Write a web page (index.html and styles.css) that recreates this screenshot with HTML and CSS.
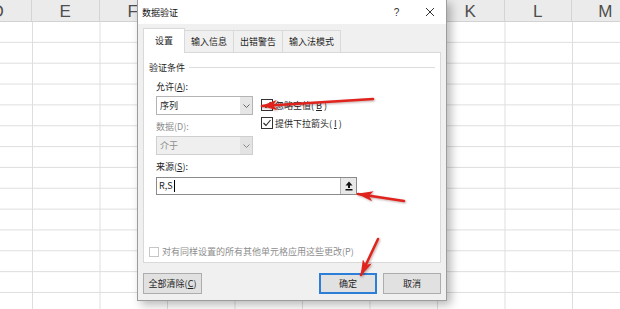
FILE: index.html
```html
<!DOCTYPE html>
<html lang="zh-CN">
<head>
  <meta charset="UTF-8" />
  <title>数据验证</title>
  <link rel="stylesheet" href="styles.css">
</head>
<body>

  <div class="sheet">
    <div class="col-heads">
      <div class="col-head">D</div>
      <div class="col-head">E</div>
      <div class="col-head">F</div>
      <div class="col-head">G</div>
      <div class="col-head">H</div>
      <div class="col-head">I</div>
      <div class="col-head">J</div>
      <div class="col-head">K</div>
      <div class="col-head">L</div>
      <div class="col-head">M</div>
    </div>
    <div class="cells"></div>
  </div>

  <div class="dialog">
    <div class="titlebar">
      <span class="title">数据验证</span>
      <span class="tb-btn tb-help">?</span>
      <span class="tb-btn">
        <svg width="10" height="10" viewBox="0 0 10 10"><path d="M1 1 L9 9 M9 1 L1 9" stroke="#333" stroke-width="1" /></svg>
      </span>
    </div>

    <div class="dialog-body">
      <div class="tabs">
        <div class="tab active">设置</div>
        <div class="tab">输入信息</div>
        <div class="tab">出错警告</div>
        <div class="tab">输入法模式</div>
      </div>

      <div class="panel">
        <div class="group-title"><span>验证条件</span></div>

        <div class="criteria">
          <div class="fields">
            <div class="label">允许(<u>A</u>):</div>
            <div class="select">
              <span class="select-value">序列</span>
              <span class="select-arrow"><svg width="7" height="4" viewBox="0 0 7 4"><path d="M0.5 0.5 L3.5 3.5 L6.5 0.5" fill="none" stroke="#666" /></svg></span>
            </div>
            <div class="label label-data disabled">数据(D):</div>
            <div class="select disabled">
              <span class="select-value">介于</span>
              <span class="select-arrow"><svg width="7" height="4" viewBox="0 0 7 4"><path d="M0.5 0.5 L3.5 3.5 L6.5 0.5" fill="none" stroke="#888" /></svg></span>
            </div>
          </div>

          <div class="checks">
            <div class="check">
              <span class="box"><svg width="10" height="10" viewBox="0 0 10 10"><path d="M1.5 5 L4 7.5 L8.5 2" fill="none" stroke="#222" stroke-width="1.1" /></svg></span>
              忽略空值(<u>B</u>)
            </div>
            <div class="check">
              <span class="box"><svg width="10" height="10" viewBox="0 0 10 10"><path d="M1.5 5 L4 7.5 L8.5 2" fill="none" stroke="#222" stroke-width="1.1" /></svg></span>
              提供下拉箭头(<u>I</u>)
            </div>
          </div>
        </div>

        <div class="label label-source">来源(<u>S</u>):</div>
        <div class="source">
          <span class="source-value">R,S<span class="caret"></span></span>
          <span class="collapse-btn">
            <svg width="8" height="10" viewBox="0 0 8 10">
              <path d="M4 0.5 L7.5 4.5 L5 4.5 L5 7 L3 7 L3 4.5 L0.5 4.5 Z" fill="#111" />
              <rect x="0.5" y="8" width="7" height="1.5" fill="#111" />
            </svg>
          </span>
        </div>

        <div class="apply-all">
          <span class="box box-off"></span>
          对有同样设置的所有其他单元格应用这些更改(P)
        </div>
      </div>

      <div class="footer">
        <div class="btn">全部清除(<u>C</u>)</div>
        <div class="btn btn-default">确定</div>
        <div class="btn">取消</div>
      </div>
    </div>
  </div>

  <svg class="arrows" width="620" height="309" viewBox="0 0 620 309">
    <defs>
      <marker id="head" viewBox="0 0 16 10" refX="15" refY="5" markerWidth="16" markerHeight="10" markerUnits="userSpaceOnUse" orient="auto">
        <path d="M0 0 L16 5 L0 10 L4 5 Z" fill="#e0231c" />
      </marker>
    </defs>
    <line x1="373" y1="99" x2="262" y2="106" marker-end="url(#head)" />
    <line x1="404" y1="201" x2="358" y2="194" marker-end="url(#head)" />
    <line x1="378" y1="239" x2="361" y2="275" marker-end="url(#head)" />
  </svg>

</body>
</html>
```

FILE: styles.css
```css
body {
  margin: 0;
  width: 620px;
  height: 309px;
  position: relative;
  overflow: hidden;
  background: #fff;
  font-family: "Noto Sans CJK SC", "Liberation Sans", sans-serif;
  font-size: 9px;
  color: #1e1e1e;
}

/* spreadsheet behind the dialog */
.sheet {
  height: 100%;
  display: flex;
  flex-direction: column;
}

.col-heads {
  display: flex;
  height: 22px;
  margin-left: -35.5px;
  background: #ebebeb;
  border-bottom: 1px solid #d2d2d2;
  box-sizing: border-box;
}

.col-head {
  flex: 0 0 67.5px;
  box-sizing: border-box;
  border-right: 1px solid #d4d4d4;
  text-align: center;
  font-family: "Liberation Sans", sans-serif;
  font-size: 17px;
  line-height: 20px;
  padding-top: 2px;
  color: #4e4e4e;
}

.cells {
  flex: 1;
  background-image:
    linear-gradient(to right, transparent 66.5px, #dedede 66.5px),
    linear-gradient(to bottom, transparent 19.85px, #dedede 19.85px);
  background-size: 67.5px 100%, 100% 20.85px;
  background-position: 33px 0, 0 0;
}

/* dialog window */
.dialog {
  position: absolute;
  left: 137px;
  top: -1px;
  width: 310px;
  height: 302px;
  box-sizing: border-box;
  border: 1px solid #9c9c9c;
  background: #f0f0f0;
  box-shadow: 4px 4px 9px rgba(0, 0, 0, 0.28);
  display: flex;
  flex-direction: column;
}

.titlebar {
  height: 24px;
  flex: none;
  background: #fff;
  display: flex;
  align-items: center;
  padding-left: 4px;
}

.title {
  flex: 1;
  color: #111;
}

.tb-btn {
  width: 33px;
  height: 24px;
  display: flex;
  align-items: center;
  justify-content: center;
}

.tb-help {
  font-family: "Liberation Sans", sans-serif;
  font-size: 10px;
  color: #333;
}

.dialog-body {
  flex: 1;
  padding: 4px 5px 0 5px;
  display: flex;
  flex-direction: column;
}

.tabs {
  display: flex;
  align-items: flex-end;
  height: 24px;
}

.tab {
  height: 22px;
  line-height: 21px;
  padding: 0 6px;
  box-sizing: border-box;
  border: 1px solid #d9d9d9;
  border-bottom: none;
  margin-right: -1px;
  background: #f0f0f0;
  color: #1e1e1e;
}

.tab.active {
  height: 25px;
  line-height: 24px;
  padding: 0 11px;
  background: #fff;
  margin-bottom: -1px;
  position: relative;
  z-index: 1;
}

.panel {
  height: 211px;
  box-sizing: border-box;
  background: #fff;
  border: 1px solid #d9d9d9;
  padding: 7px 5px 0 5px;
}

.group-title {
  display: flex;
  align-items: center;
  height: 14px;
  color: #1e1e1e;
}

.group-title::after {
  content: "";
  flex: 1;
  height: 1px;
  margin-left: 4px;
  background: #dcdcdc;
}

.criteria {
  display: flex;
  margin-left: 7px;
  margin-top: 6px;
}

.fields {
  width: 97px;
}

.label {
  height: 14px;
  line-height: 14px;
}

.label.disabled {
  color: #8d8d8d;
}

.label-data {
  margin-top: 5px;
}

.label-source {
  margin-left: 7px;
  margin-top: 5px;
}

.select {
  margin-top: 2px;
  height: 19px;
  box-sizing: border-box;
  border: 1px solid #b4b4b4;
  background: #fff;
  display: flex;
}

.select-value {
  flex: 1;
  line-height: 17px;
  padding-left: 3px;
}

.select-arrow {
  width: 12px;
  background: #e6e6e6;
  display: flex;
  align-items: center;
  justify-content: center;
}

.select.disabled {
  background: #efefef;
  border-color: #cfcfcf;
  color: #8d8d8d;
}

.select.disabled .select-arrow {
  background: #e3e3e3;
}

.checks {
  margin-left: 8px;
  margin-top: 16px;
}

.check {
  height: 18px;
  display: flex;
  align-items: center;
  gap: 2px;
}

.box {
  width: 12px;
  height: 12px;
  box-sizing: border-box;
  border: 1px solid #333;
  background: #fff;
  display: flex;
  align-items: center;
  justify-content: center;
}

.source {
  margin-left: 7px;
  margin-top: 3px;
  width: 201px;
  height: 18px;
  box-sizing: border-box;
  border: 1px solid #8a8a8a;
  background: #fff;
  display: flex;
}

.source-value {
  flex: 1;
  line-height: 16px;
  padding-left: 2px;
  display: flex;
  align-items: center;
}

.caret {
  width: 1px;
  height: 12px;
  margin-left: 1px;
  background: #000;
}

.collapse-btn {
  width: 15px;
  background: #e8e8e8;
  border-left: 1px solid #b4b4b4;
  display: flex;
  align-items: center;
  justify-content: center;
}

.apply-all {
  margin-top: 50px;
  display: flex;
  align-items: center;
  gap: 3px;
  color: #8d8d8d;
}

.box-off {
  width: 10px;
  height: 10px;
  border-color: #c6c6c6;
}

.footer {
  display: flex;
  gap: 6px;
  margin-top: 10px;
}

.btn {
  width: 58px;
  height: 21px;
  box-sizing: border-box;
  border: 1px solid #adadad;
  background: #e1e1e1;
  text-align: center;
  line-height: 19px;
}

.footer .btn:first-child {
  width: 59px;
  margin-right: auto;
}

.btn-default {
  border: 2px solid #2c7ed6;
  line-height: 17px;
}

/* red annotation arrows */
.arrows {
  position: absolute;
  left: 0;
  top: 0;
  pointer-events: none;
  filter: drop-shadow(1px 1px 1px rgba(80, 0, 0, 0.35));
}

.arrows line {
  stroke: #e0231c;
  stroke-width: 2.5;
  stroke-linecap: round;
}
```
